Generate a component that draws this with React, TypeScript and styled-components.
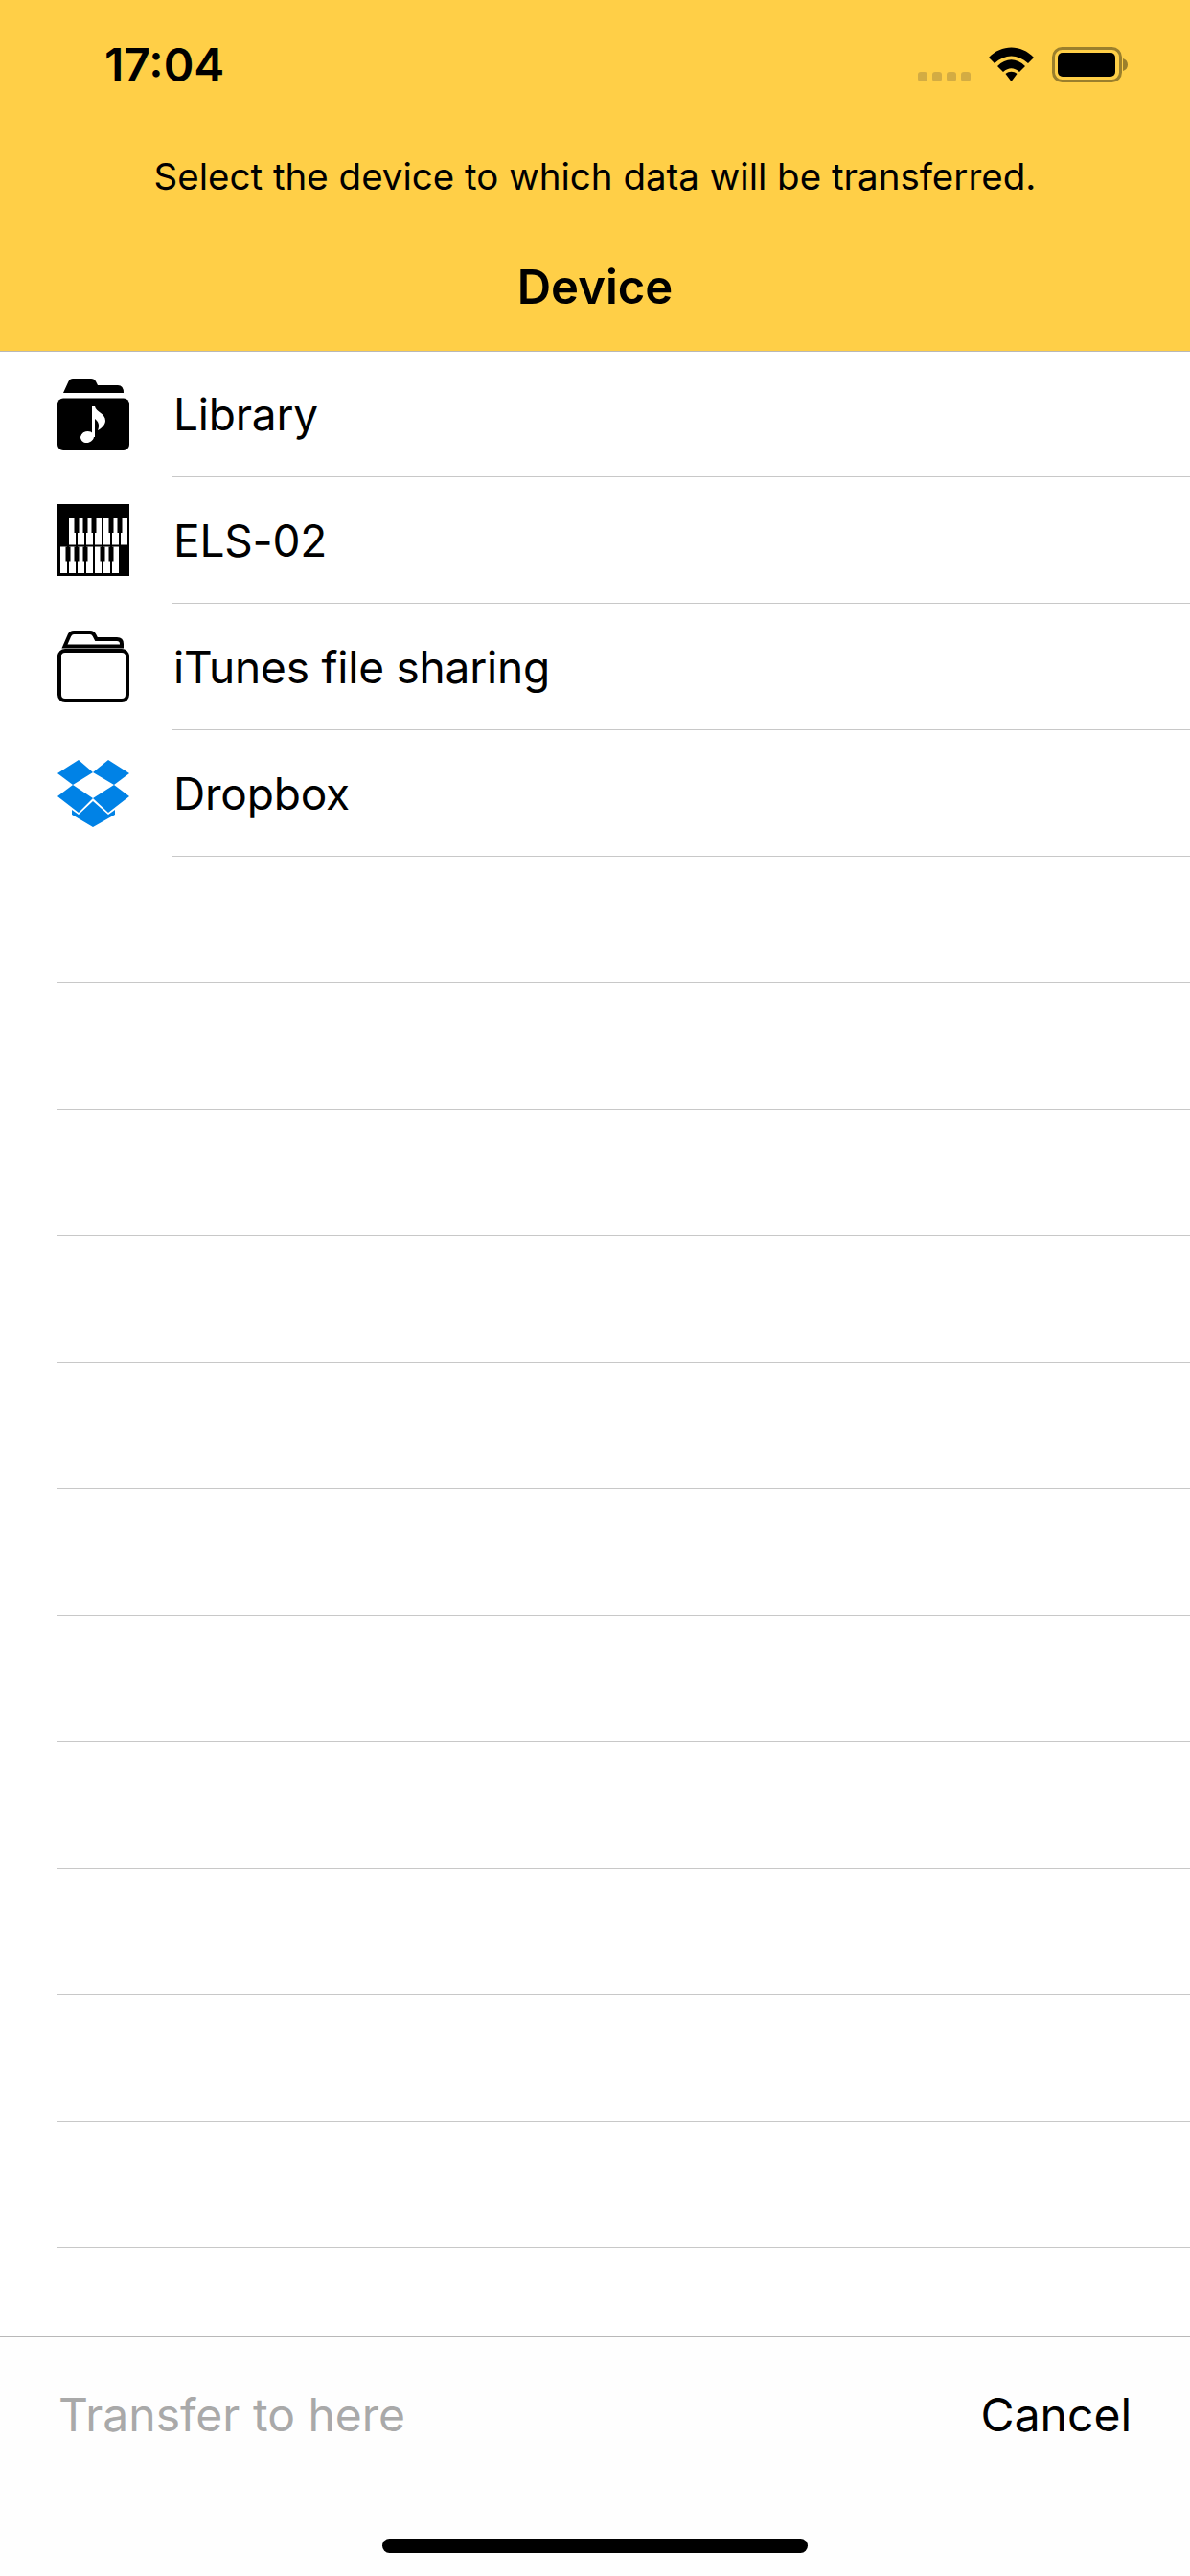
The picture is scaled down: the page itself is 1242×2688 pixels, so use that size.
import React from 'react';
import styled, { createGlobalStyle } from 'styled-components';

const GlobalStyle = createGlobalStyle`
  html, body {
    margin: 0;
    padding: 0;
    background: #fff;
    font-family: Inter, "Liberation Sans", sans-serif;
    color: #000;
  }
`;

const Screen = styled.div`
  width: 1242px;
  height: 2688px;
  display: flex;
  flex-direction: column;
  overflow: hidden;
`;

const Header = styled.header`
  height: 367px;
  flex: none;
  box-sizing: border-box;
  background: #ffcf47;
  border-bottom: 1.5px solid #b8b8b8;
  margin-bottom: -1px;
  display: flex;
  flex-direction: column;
  align-items: center;
`;

const StatusBar = styled.div`
  width: 100%;
  box-sizing: border-box;
  height: 90px;
  padding: 46px 65px 0 109px;
  display: flex;
  justify-content: space-between;
  align-items: flex-start;
`;

const Clock = styled.span`
  font-size: 48px;
  line-height: 44px;
  font-weight: 600;
`;

const StatusIcons = styled.div`
  display: flex;
  align-items: flex-start;
  padding-top: 3px;
`;

const SignalDots = styled.div`
  display: flex;
  gap: 5px;
  margin: 26px 19px 0 0;
`;

const SignalDot = styled.i`
  display: block;
  width: 10px;
  height: 10px;
  border-radius: 3px;
  background: #d3ac43;
`;

const WifiIcon = styled.svg`
  width: 47px;
  height: 36px;
  margin-right: 19px;
`;

const BatteryIcon = styled.svg`
  width: 79px;
  height: 38px;
`;

const Prompt = styled.p`
  margin: 72px 0 0;
  font-size: 38.5px;
  line-height: 44px;
`;

const Title = styled.h1`
  margin: 64px 0 0;
  font-size: 49px;
  line-height: 60px;
  font-weight: 600;
`;

const List = styled.main`
  flex: 1;
  min-height: 0;
`;

const Row = styled.div<{ $inset: number }>`
  height: 132px;
  box-sizing: border-box;
  margin-left: ${(p) => p.$inset}px;
  border-bottom: 1.5px solid #c8c8c8;
  display: flex;
  align-items: center;
`;

const DeviceRow = styled(Row)`
  position: relative;
`;

const IconSlot = styled.div`
  position: absolute;
  left: -120px;
  top: 0;
  bottom: 0;
  width: 75px;
  display: flex;
  align-items: center;
`;

const DeviceName = styled.span`
  margin-left: 1px;
  font-size: 46px;
  line-height: 60px;
  letter-spacing: -0.2px;
`;

const DeviceIcon = styled.svg`
  width: 75px;
  display: block;
`;

const Footer = styled.footer`
  height: 250px;
  flex: none;
  box-sizing: border-box;
  background: #fefefe;
  border-top: 1.5px solid #b8b8b8;
  display: flex;
  flex-direction: column;
`;

const ActionBar = styled.div`
  height: 162px;
  box-sizing: border-box;
  padding: 0 61px;
  display: flex;
  justify-content: space-between;
  align-items: center;
`;

const ActionLabel = styled.span<{ $disabled?: boolean }>`
  font-size: 48px;
  line-height: 60px;
  color: ${(p) => (p.$disabled ? '#a9a9a9' : '#000')};
`;

const HomeBar = styled.div`
  width: 444px;
  height: 15px;
  margin: 48px auto 0;
  border-radius: 8px;
  background: #000;
`;

const LibraryIcon = () => (
  <DeviceIcon viewBox="0 0 75 76" height="76">
    <path d="M6 16 L11.5 4 Q13 1 16 1 H35 Q38.5 1 40 4 L42 8 H63 Q69 8 69 16 Z" />
    <rect y="21.5" width="75" height="54.5" rx="6" />
    <ellipse cx="31" cy="62" rx="7" ry="6" fill="#fff" transform="rotate(-15 31 62)" />
    <path
      d="M36 62 V30 H39 C40 36 50 37 50 45 C50 49 46 53 42 55 C44 50 43 46 39 43 V62 Z"
      fill="#fff"
    />
  </DeviceIcon>
);

const flatKeys = [0, 1, 2, 3, 4, 5, 6];
const blackKeys = [1, 2, 3, 5, 6];

const Manual = ({ x, y }: { x: number; y: number }) => (
  <g transform={`translate(${x} ${y})`}>
    {flatKeys.map((k) => (
      <rect key={k} x={k * 9} width="7" height="27.5" fill="#fff" />
    ))}
    {blackKeys.map((k) => (
      <rect key={k} x={k * 9 - 3.5} width="5" height="15" fill="#000" />
    ))}
  </g>
);

const KeyboardIcon = () => (
  <DeviceIcon viewBox="0 0 75 75" height="75">
    <rect width="75" height="75" />
    <Manual x={12} y={15} />
    <Manual x={3} y={44.5} />
  </DeviceIcon>
);

const FolderIcon = () => (
  <DeviceIcon viewBox="0 0 75 75" height="75">
    <g fill="none" stroke="#000" strokeWidth="4">
      <path d="M7.500 16.500 L12.500 5 Q14 2 17 2 H34 Q37 2 38.500 5 L40.500 9 H62 Q67 9 67 14 V16.500 Z" />
      <rect x="2" y="21" width="71" height="52" rx="6" />
    </g>
  </DeviceIcon>
);

const DropboxIcon = () => (
  <DeviceIcon viewBox="0 0 75 70" height="70">
    <g fill="#0082e6">
      <path d="M0 14 L22 0 L37 13 L16 26 Z" />
      <path d="M37 13 L53 0 L75 14 L59 26 Z" />
      <path d="M0 38 L16 26 L37 40 L22 55 Z" />
      <path d="M37 40 L59 26 L75 38 L53 55 Z" />
      <path d="M37 43 L53 57 L60 52 V57 L37 70 L15 57 V52 L22 57 Z" />
    </g>
  </DeviceIcon>
);

const devices = [
  { name: 'Library', icon: <LibraryIcon /> },
  { name: 'ELS-02', icon: <KeyboardIcon /> },
  { name: 'iTunes file sharing', icon: <FolderIcon /> },
  { name: 'Dropbox', icon: <DropboxIcon /> },
];

const emptyRows = Array.from({ length: 11 }, (_, i) => i);

const App: React.FC = () => {
  return (
    <Screen>
      <GlobalStyle />
      <Header>
        <StatusBar>
          <Clock>17:04</Clock>
          <StatusIcons>
            <SignalDots>
              <SignalDot />
              <SignalDot />
              <SignalDot />
              <SignalDot />
            </SignalDots>
            <WifiIcon viewBox="0 0 47 36">
              <path d="M0 11 C13 -3 34 -3 47 11 L41 17 C30 7 17 7 6 17 Z" />
              <path d="M9 20 C18 11 29 11 38 20 L32 26 C26 21 21 21 15 26 Z" />
              <path d="M17.5 28 C21 25 26 25 29.5 28 L23.5 36 Z" />
            </WifiIcon>
            <BatteryIcon viewBox="0 0 79 38">
              <rect x="1.5" y="1.5" width="70" height="34" rx="9" fill="none" stroke="#9b7f2c" strokeWidth="3" />
              <rect x="6" y="6" width="60" height="25" rx="5" />
              <path d="M74 12 C77 13 79 15 79 18.500 C79 22 77 24 74 25 Z" fill="#9b7f2c" />
            </BatteryIcon>
          </StatusIcons>
        </StatusBar>
        <Prompt>Select the device to which data will be transferred.</Prompt>
        <Title>Device</Title>
      </Header>
      <List>
        {devices.map((d) => (
          <DeviceRow key={d.name} $inset={180}>
            <IconSlot>{d.icon}</IconSlot>
            <DeviceName>{d.name}</DeviceName>
          </DeviceRow>
        ))}
        {emptyRows.map((i) => (
          <Row key={i} $inset={60} />
        ))}
      </List>
      <Footer>
        <ActionBar>
          <ActionLabel $disabled>Transfer to here</ActionLabel>
          <ActionLabel>Cancel</ActionLabel>
        </ActionBar>
        <HomeBar />
      </Footer>
    </Screen>
  );
};

export default App;
